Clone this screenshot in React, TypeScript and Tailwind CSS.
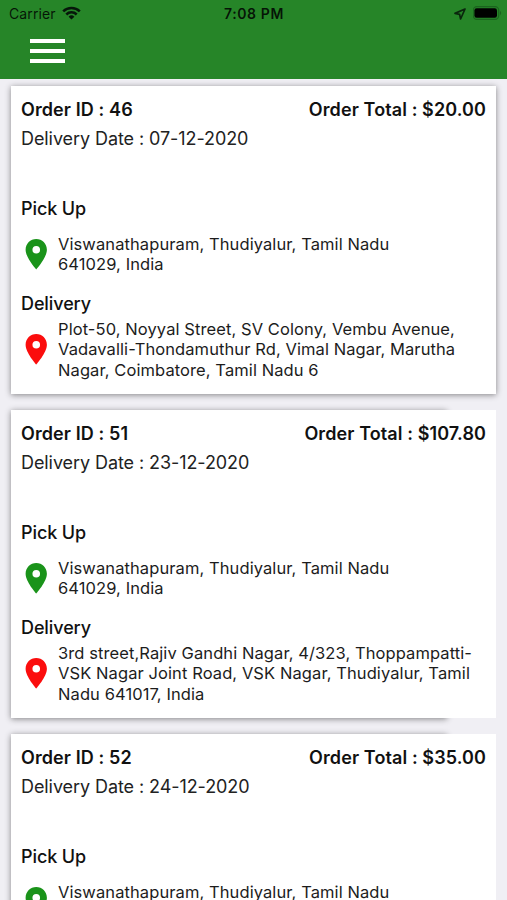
import { MdLocationOn } from 'react-icons/md';

type Order = {
  id: number;
  total: string;
  date: string;
  pickup: string[];
  delivery: string[];
  // width of the shadow layer behind the card
  shadow: string;
};

const PICKUP = ['Viswanathapuram, Thudiyalur, Tamil Nadu', '641029, India'];

const orders: Order[] = [
  {
    id: 46,
    total: '$20.00',
    date: '07-12-2020',
    pickup: PICKUP,
    delivery: [
      'Plot-50, Noyyal Street, SV Colony, Vembu Avenue,',
      'Vadavalli-Thondamuthur Rd, Vimal Nagar, Marutha',
      'Nagar, Coimbatore, Tamil Nadu 6'
    ],
    shadow: 'w-full'
  },
  {
    id: 51,
    total: '$107.80',
    date: '23-12-2020',
    pickup: PICKUP,
    delivery: [
      '3rd street,Rajiv Gandhi Nagar, 4/323, Thoppampatti-',
      'VSK Nagar Joint Road, VSK Nagar, Thudiyalur, Tamil',
      'Nadu 641017, India'
    ],
    shadow: 'w-[436px]'
  },
  {
    id: 52,
    total: '$35.00',
    date: '24-12-2020',
    pickup: PICKUP.slice(0, 1),
    delivery: [],
    shadow: 'w-[436px]'
  }
];

function StatusBar() {
  return (
    <div className="grid h-[27px] grid-cols-3 items-center pl-[9px] pr-[5px] text-[14px] text-black/85">
      <div className="flex items-center gap-[6px]">
        <span className="tracking-[0.1px]">Carrier</span>
        <svg width="19" height="14" viewBox="0 0 19 14" className="-mt-[2px]" fill="none" stroke="#06160a" strokeWidth="2.5">
          <path d="M1.2 5.3a11.8 11.8 0 0 1 16.6 0" />
          <path d="M4.3 8.5a7.4 7.4 0 0 1 10.4 0" />
          <path d="M9.5 13.6 6.6 10.7a4.1 4.1 0 0 1 5.8 0z" fill="#06160a" stroke="none" />
        </svg>
      </div>
      <div className="-ml-[3px] text-center font-semibold tracking-[0.6px]">7:08 PM</div>
      <div className="flex items-center justify-end gap-[6px]">
        <svg width="12" height="12" viewBox="0 0 12 12" className="mr-[1px]" fill="none" stroke="#0a260d" strokeWidth="1.7" strokeLinejoin="round">
          <path d="M11 1 1 5.4 5.6 6.4l1 4.6z" />
        </svg>
        <svg width="29" height="14" viewBox="0 0 29 14" className="-mt-[1px]">
          <rect x="0.3" y="0.6" width="25.4" height="12.8" rx="3.6" fill="none" stroke="#1b641e" strokeWidth="1.1" />
          <rect x="1.4" y="2.2" width="22.6" height="9.6" rx="2.2" fill="#000" />
          <path d="M27 5v4.2c1.6-.7 1.6-3.5 0-4.2z" fill="#1b641e" />
        </svg>
      </div>
    </div>
  );
}

function Address({ lines, color }: { lines: string[]; color: string }) {
  return (
    <div className="flex min-h-[41px] items-center">
      <MdLocationOn className={`-ml-[3.5px] h-[36.5px] w-[36.5px] shrink-0 ${color}`} />
      <div className="ml-[4px] min-h-[41px] text-[16.5px] leading-[20.4px] tracking-[0.09px] whitespace-nowrap text-[#1c1c1c]">
        {lines.map((line) => (
          <p key={line}>{line}</p>
        ))}
      </div>
    </div>
  );
}

function OrderCard({ order }: { order: Order }) {
  return (
    <div className="relative h-[308px] shrink-0">
      <div className={`absolute inset-y-0 left-0 shadow-[0_1px_6px_rgba(0,0,0,0.45)] ${order.shadow}`} />
      <div className="relative h-full bg-white px-[10px] pt-[12px] text-[18px] leading-6 text-[#111]">
        <div className="flex justify-between font-semibold tracking-[0.1px]">
          <span>Order ID : {order.id}</span>
          <span>Order Total : {order.total}</span>
        </div>
        <p className="mt-[5px] tracking-[-0.08px] text-[#222]">Delivery Date : {order.date}</p>
        <p className="mt-[46px] font-medium tracking-[-0.1px]">Pick Up</p>
        <div className="mt-[13px]">
          <Address lines={order.pickup} color="text-[#1a931a]" />
        </div>
        {order.delivery.length > 0 && (
          <>
            <p className="mt-[17px] font-medium tracking-[-0.1px]">Delivery</p>
            <div className="mt-[3px]">
              <Address lines={order.delivery} color="text-[#fb0d0d]" />
            </div>
          </>
        )}
      </div>
    </div>
  );
}

export default function App() {
  return (
    <div className="flex h-[900px] w-[507px] flex-col overflow-hidden bg-[#f0eff4] font-['Inter',sans-serif]">
      <header className="h-[79px] shrink-0 bg-[#268528]">
        <StatusBar />
        <button type="button" aria-label="Menu" className="mt-[12px] ml-[30px] flex flex-col gap-[6px]">
          <span className="h-[4px] w-[35px] bg-white" />
          <span className="h-[4px] w-[35px] bg-white" />
          <span className="h-[4px] w-[35px] bg-white" />
        </button>
      </header>
      <main className="flex min-h-0 flex-1 flex-col gap-4 overflow-hidden pt-[7px] pr-[11px] pl-[11px]">
        {orders.map((order) => (
          <OrderCard key={order.id} order={order} />
        ))}
      </main>
    </div>
  );
}
